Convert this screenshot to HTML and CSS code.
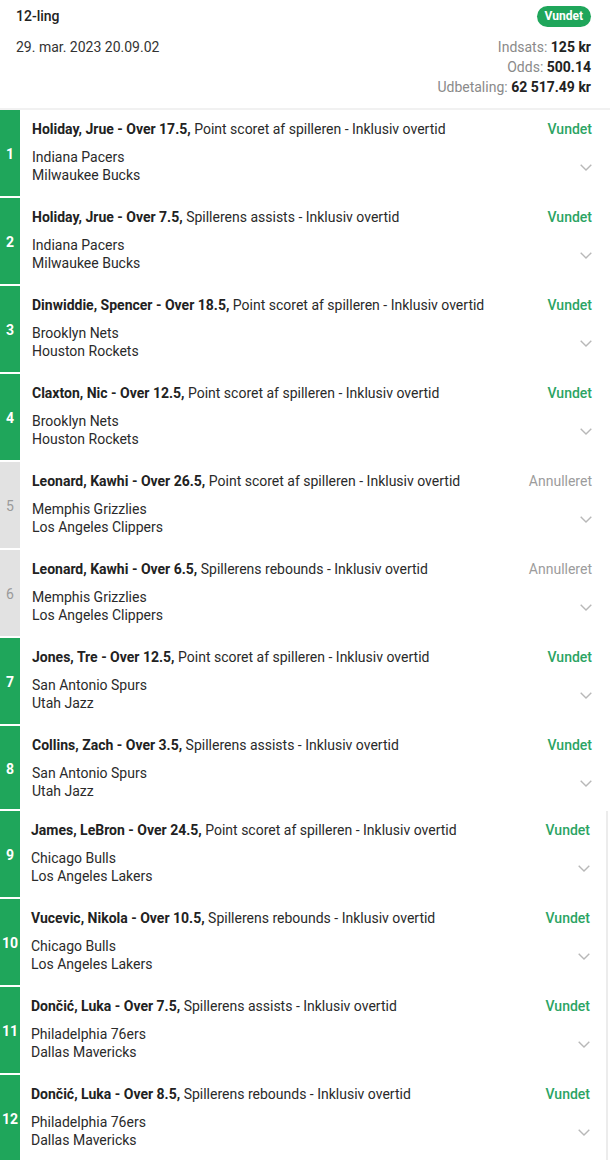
FILE: index.html
```html
<!DOCTYPE html>
<html lang="da">
<head>
<meta charset="utf-8">
<link rel="stylesheet" href="styles.css">
</head>
<body>
<div class="page">
  <header class="head">
    <div class="head-left">
      <div class="head-title">12-ling</div>
      <div class="head-date">29. mar. 2023 20.09.02</div>
    </div>
    <div class="head-right">
      <span class="badge">Vundet</span>
      <div class="stats">
        <div><span class="lbl">Indsats:</span> <b>125 kr</b></div>
        <div><span class="lbl">Odds:</span> <b>500.14</b></div>
        <div><span class="lbl">Udbetaling:</span> <b>62 517.49 kr</b></div>
      </div>
    </div>
  </header>

  <div class="group">
    <div class="row won"><div class="num">1</div><div class="body"><div class="line"><div class="title"><b>Holiday, Jrue - Over 17.5,</b> Point scoret af spilleren - Inklusiv overtid</div><div class="status">Vundet</div></div><div class="line2"><div class="teams">Indiana Pacers<br>Milwaukee Bucks</div><svg class="chev" viewBox="0 0 12 7"><path d="M0.7 0.7 L6 6 L11.3 0.7"/></svg></div></div></div>
    <div class="row won"><div class="num">2</div><div class="body"><div class="line"><div class="title"><b>Holiday, Jrue - Over 7.5,</b> Spillerens assists - Inklusiv overtid</div><div class="status">Vundet</div></div><div class="line2"><div class="teams">Indiana Pacers<br>Milwaukee Bucks</div><svg class="chev" viewBox="0 0 12 7"><path d="M0.7 0.7 L6 6 L11.3 0.7"/></svg></div></div></div>
    <div class="row won"><div class="num">3</div><div class="body"><div class="line"><div class="title"><b>Dinwiddie, Spencer - Over 18.5,</b> Point scoret af spilleren - Inklusiv overtid</div><div class="status">Vundet</div></div><div class="line2"><div class="teams">Brooklyn Nets<br>Houston Rockets</div><svg class="chev" viewBox="0 0 12 7"><path d="M0.7 0.7 L6 6 L11.3 0.7"/></svg></div></div></div>
    <div class="row won"><div class="num">4</div><div class="body"><div class="line"><div class="title"><b>Claxton, Nic - Over 12.5,</b> Point scoret af spilleren - Inklusiv overtid</div><div class="status">Vundet</div></div><div class="line2"><div class="teams">Brooklyn Nets<br>Houston Rockets</div><svg class="chev" viewBox="0 0 12 7"><path d="M0.7 0.7 L6 6 L11.3 0.7"/></svg></div></div></div>
    <div class="row void"><div class="num">5</div><div class="body"><div class="line"><div class="title"><b>Leonard, Kawhi - Over 26.5,</b> Point scoret af spilleren - Inklusiv overtid</div><div class="status">Annulleret</div></div><div class="line2"><div class="teams">Memphis Grizzlies<br>Los Angeles Clippers</div><svg class="chev" viewBox="0 0 12 7"><path d="M0.7 0.7 L6 6 L11.3 0.7"/></svg></div></div></div>
    <div class="row void"><div class="num">6</div><div class="body"><div class="line"><div class="title"><b>Leonard, Kawhi - Over 6.5,</b> Spillerens rebounds - Inklusiv overtid</div><div class="status">Annulleret</div></div><div class="line2"><div class="teams">Memphis Grizzlies<br>Los Angeles Clippers</div><svg class="chev" viewBox="0 0 12 7"><path d="M0.7 0.7 L6 6 L11.3 0.7"/></svg></div></div></div>
    <div class="row won"><div class="num">7</div><div class="body"><div class="line"><div class="title"><b>Jones, Tre - Over 12.5,</b> Point scoret af spilleren - Inklusiv overtid</div><div class="status">Vundet</div></div><div class="line2"><div class="teams">San Antonio Spurs<br>Utah Jazz</div><svg class="chev" viewBox="0 0 12 7"><path d="M0.7 0.7 L6 6 L11.3 0.7"/></svg></div></div></div>
    <div class="row won short"><div class="num">8</div><div class="body"><div class="line"><div class="title"><b>Collins, Zach - Over 3.5,</b> Spillerens assists - Inklusiv overtid</div><div class="status">Vundet</div></div><div class="line2"><div class="teams">San Antonio Spurs<br>Utah Jazz</div><svg class="chev" viewBox="0 0 12 7"><path d="M0.7 0.7 L6 6 L11.3 0.7"/></svg></div></div></div>
  </div>

  <div class="group group2">
    <div class="row won"><div class="num">9</div><div class="body"><div class="line"><div class="title"><b>James, LeBron - Over 24.5,</b> Point scoret af spilleren - Inklusiv overtid</div><div class="status">Vundet</div></div><div class="line2"><div class="teams">Chicago Bulls<br>Los Angeles Lakers</div><svg class="chev" viewBox="0 0 12 7"><path d="M0.7 0.7 L6 6 L11.3 0.7"/></svg></div></div></div>
    <div class="row won"><div class="num">10</div><div class="body"><div class="line"><div class="title"><b>Vucevic, Nikola - Over 10.5,</b> Spillerens rebounds - Inklusiv overtid</div><div class="status">Vundet</div></div><div class="line2"><div class="teams">Chicago Bulls<br>Los Angeles Lakers</div><svg class="chev" viewBox="0 0 12 7"><path d="M0.7 0.7 L6 6 L11.3 0.7"/></svg></div></div></div>
    <div class="row won"><div class="num">11</div><div class="body"><div class="line"><div class="title"><b>Dončić, Luka - Over 7.5,</b> Spillerens assists - Inklusiv overtid</div><div class="status">Vundet</div></div><div class="line2"><div class="teams">Philadelphia 76ers<br>Dallas Mavericks</div><svg class="chev" viewBox="0 0 12 7"><path d="M0.7 0.7 L6 6 L11.3 0.7"/></svg></div></div></div>
    <div class="row won"><div class="num">12</div><div class="body"><div class="line"><div class="title"><b>Dončić, Luka - Over 8.5,</b> Spillerens rebounds - Inklusiv overtid</div><div class="status">Vundet</div></div><div class="line2"><div class="teams">Philadelphia 76ers<br>Dallas Mavericks</div><svg class="chev" viewBox="0 0 12 7"><path d="M0.7 0.7 L6 6 L11.3 0.7"/></svg></div></div></div>
  </div>
</div>
</body>
</html>
```

FILE: styles.css
```css
* { box-sizing: border-box; }
html, body { margin: 0; padding: 0; background: #fff; }
body {
  font-family: Roboto, "Liberation Sans", Arial, sans-serif;
  font-size: 14px;
  color: #2a2a2a;
  width: 610px;
  overflow: hidden;
}
.page { width: 610px; }

.head {
  display: flex;
  justify-content: space-between;
  padding: 6px 19px 11px 16px;
  border-bottom: 2px solid #f1f1f1;
}
.head-left { display: flex; flex-direction: column; }
.head-title { line-height: 20px; font-weight: 500; color: #222; }
.head-date { line-height: 20px; margin-top: 11px; color: #333; }
.head-right { display: flex; flex-direction: column; align-items: flex-end; }
.badge {
  display: inline-block;
  height: 21px;
  line-height: 21px;
  padding: 0 8px;
  border-radius: 11px;
  background: #1fa65b;
  color: #fff;
  font-size: 12px;
  font-weight: 700;
}
.stats { margin-top: 10px; text-align: right; line-height: 20px; }
.stats .lbl { color: #8a8a8a; }
.stats b { font-weight: 700; color: #222; }

.group { display: flex; flex-direction: column; gap: 2px; }
.group2 { margin-top: 2px; width: 608px; border-right: 2px solid #ececec; }

.row { display: flex; height: 86px; }
.row.short { height: 83px; }
.num {
  width: 20px;
  flex: none;
  display: flex;
  align-items: center;
  justify-content: center;
  font-size: 14px;
  font-weight: 700;
  color: #fff;
  background: #1fa65b;
  padding-top: 2px;
}
.row.void .num { background: #e2e2e2; color: #9a9a9a; font-weight: 400; }

.body { flex: 1; padding: 9px 18px 0 12px; min-width: 0; }
.line { display: flex; justify-content: space-between; line-height: 20px; }
.title { color: #2a2a2a; white-space: nowrap; }
.title b { font-weight: 700; color: #222; }
.status { font-weight: 500; color: #2ca463; }
.row.void .status { font-weight: 400; color: #9c9c9c; }
.line2 { display: flex; justify-content: space-between; margin-top: 9px; }
.teams { line-height: 18px; color: #2a2a2a; }
.chev {
  width: 12px;
  height: 7px;
  margin-top: 16px;
  fill: none;
  stroke: #b8b8b8;
  stroke-width: 1.4;
}
.group2 .body { padding-left: 11px; padding-right: 16px; }
```
